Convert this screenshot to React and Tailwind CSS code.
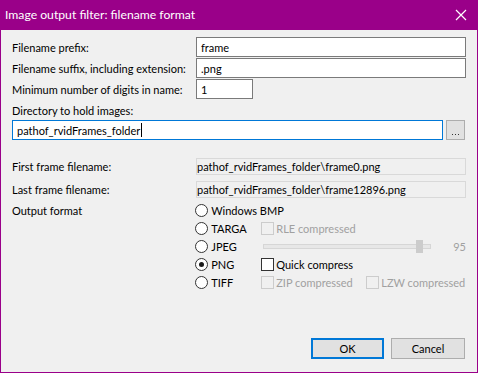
import React from "react";

function Radio({ checked, label }) {
  return (
    <div className="flex items-center w-[66px]">
      <span className="w-[13px] h-[13px] rounded-full border border-[#333333] bg-white flex items-center justify-center shrink-0">
        {checked && <span className="w-[5px] h-[5px] rounded-full bg-[#1a1a1a]" />}
      </span>
      <span className="ml-[3px]">{label}</span>
    </div>
  );
}

function Check({ label, disabled }) {
  return (
    <div className={"flex items-center " + (disabled ? "text-[#a0a0a0]" : "text-black")}>
      <span className={"w-[13px] h-[13px] border shrink-0 " + (disabled ? "border-[#cccccc]" : "border-[#333333] bg-white")} />
      <span className="ml-[2px]">{label}</span>
    </div>
  );
}

function Field({ value, width }) {
  return (
    <div className={"h-[20px] border border-[#7a7a7a] bg-white pl-[4px] flex items-center " + width}>
      {value}
    </div>
  );
}

export default function App() {
  return (
    <div className="w-[478px] h-[373px] flex flex-col bg-[#9a0089] font-['Lato','Roboto',sans-serif] text-[11px] text-black leading-none whitespace-nowrap">
      <div className="h-[30px] shrink-0 flex items-center justify-between pl-[5px] pr-[10px] text-white text-[12.2px]">
        <span>Image output filter: filename format</span>
        <svg width="12" height="12" viewBox="0 0 12 12" className="mr-[1px]">
          <path d="M1 1 L11 11 M11 1 L1 11" stroke="white" strokeWidth="1.2" />
        </svg>
      </div>

      <div className="flex-1 mx-[1px] mb-[1px] bg-[#f0f0f0] pl-[11px] pr-[11px] flex flex-col">
        <div className="mt-[7px] flex flex-col gap-[1px]">
          <div className="flex items-center">
            <span className="w-[184px]">Filename prefix:</span>
            <Field value="frame" width="flex-1" />
          </div>
          <div className="flex items-center">
            <span className="w-[184px]">Filename suffix, including extension:</span>
            <Field value=".png" width="flex-1" />
          </div>
          <div className="flex items-center">
            <span className="w-[184px]">Minimum number of digits in name:</span>
            <Field value="1" width="w-[57px]" />
          </div>
        </div>

        <div className="mt-[4px] h-[14px] flex items-center">Directory to hold images:</div>
        <div className="mt-[3px] flex items-center gap-[3px]">
          <div className="w-[431px] h-[20px] border border-[#0078d7] bg-white pl-[4px] flex items-center">
            pathof_rvidFrames_folder
            <span className="ml-[1px] w-[1px] h-[14px] bg-black" />
          </div>
          <div className="w-[19px] h-[20px] border border-[#adadad] bg-[#e1e1e1] flex items-end justify-center pb-[4px] gap-[2px]">
            <span className="w-[1px] h-[1px] bg-[#333]" />
            <span className="w-[1px] h-[1px] bg-[#333]" />
            <span className="w-[1px] h-[1px] bg-[#333]" />
          </div>
        </div>

        <div className="mt-[18px] flex flex-col gap-[6px]">
          <div className="flex items-center">
            <span className="w-[184px]">First frame filename:</span>
            <div className="flex-1 h-[17px] border border-[#d9d9d9] bg-[#f0f0f0] flex items-center">
              pathof_rvidFrames_folder\frame0.png
            </div>
          </div>
          <div className="flex items-center">
            <span className="w-[184px]">Last frame filename:</span>
            <div className="flex-1 h-[17px] border border-[#d9d9d9] bg-[#f0f0f0] flex items-center">
              pathof_rvidFrames_folder\frame12896.png
            </div>
          </div>
        </div>

        <div className="mt-[3px] flex">
          <span className="w-[184px] h-[18px] flex items-center">Output format</span>
          <div className="flex flex-col">
            <div className="h-[18px] flex items-center">
              <div className="flex items-center">
                <span className="w-[13px] h-[13px] rounded-full border border-[#333333] bg-white" />
                <span className="ml-[3px]">Windows BMP</span>
              </div>
            </div>
            <div className="h-[18px] flex items-center">
              <Radio label="TARGA" />
              <Check label="RLE compressed" disabled />
            </div>
            <div className="h-[18px] flex items-center">
              <Radio label="JPEG" />
              <div className="ml-[2px] w-[168px] h-[5px] border border-[#d6d6d6] bg-[#e7e7e7] relative">
                <span className="absolute left-[152px] top-[-5px] w-[7px] h-[13px] bg-[#cccccc]" />
              </div>
              <span className="ml-[22px] text-[#a0a0a0]">95</span>
            </div>
            <div className="h-[18px] flex items-center">
              <Radio label="PNG" checked />
              <Check label="Quick compress" />
            </div>
            <div className="h-[18px] flex items-center">
              <Radio label="TIFF" />
              <div className="w-[105px]">
                <Check label="ZIP compressed" disabled />
              </div>
              <Check label="LZW compressed" disabled />
            </div>
          </div>
        </div>

        <div className="flex-1" />
        <div className="mb-[13px] mr-[1px] flex justify-end gap-[7px]">
          <div className="w-[73px] h-[21px] border-2 border-[#0078d7] bg-[#e1e1e1] flex items-center justify-center">OK</div>
          <div className="w-[74px] h-[21px] border border-[#adadad] bg-[#e1e1e1] flex items-center justify-center">Cancel</div>
        </div>
      </div>
    </div>
  );
}
